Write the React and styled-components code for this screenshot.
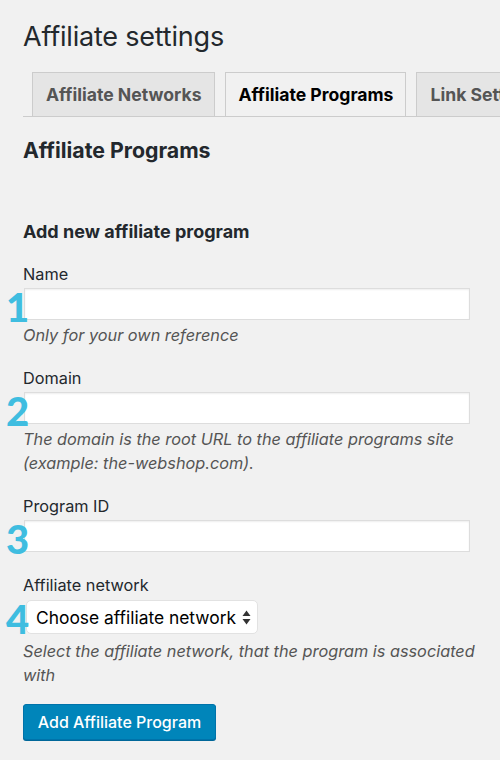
import React from "react";
import styled, { createGlobalStyle } from "styled-components";

const Global = createGlobalStyle`
  html, body { margin: 0; padding: 0; background: #f1f1f1; }
  body { font-family: Inter, "Noto Sans", sans-serif; color: #23282d; overflow: hidden; }
  * { box-sizing: border-box; }
`;

const Page = styled.div`
  width: 500px;
  height: 760px;
  overflow: hidden;
  padding: 19px 0 0 23px;
`;

const Title = styled.h1`
  margin: 0;
  font-size: 27px;
  font-weight: 400;
  line-height: 36px;
  letter-spacing: -0.2px;
`;

const TabBar = styled.div`
  display: flex;
  gap: 10px;
  padding-left: 9px;
  margin-top: 17px;
  border-bottom: 1px solid #ccc;
  white-space: nowrap;
  overflow: hidden;
`;

const Tab = styled.div`
  flex: none;
  height: 45px;
  margin-bottom: -1px;
  padding: 0 12px 0 13px;
  display: flex;
  align-items: center;
  font-size: 17.6px;
  font-weight: 700;
  border: 1px solid #ccc;
  border-bottom-color: ${(p) => (p.$active ? "#f1f1f1" : "#ccc")};
  background: ${(p) => (p.$active ? "#f1f1f1" : "#e5e5e5")};
  color: ${(p) => (p.$active ? "#000" : "#555")};
`;

const SectionTitle = styled.h2`
  margin: 19px 0 0;
  font-size: 21.3px;
  font-weight: 700;
  line-height: 28px;
`;

const SubTitle = styled.h3`
  margin: 56px 0 0;
  font-size: 18px;
  font-weight: 700;
  line-height: 24px;
`;

const Form = styled.div`
  display: flex;
  flex-direction: column;
  margin-top: 18px;
`;

const Field = styled.div`
  position: relative;
  display: flex;
  flex-direction: column;
  align-items: flex-start;
  margin-bottom: ${(p) => p.$gap}px;
`;

const Label = styled.label`
  font-size: 16.3px;
  line-height: 24px;
  color: #23282d;
`;

const Marker = styled.span`
  position: absolute;
  left: -17px;
  top: ${(p) => p.$top}px;
  font-family: Lato, "Open Sans", sans-serif;
  font-weight: 900;
  font-size: 40px;
  line-height: 1;
  color: #3fbde0;
  pointer-events: none;
  z-index: 2;
`;

const TextInput = styled.input`
  margin: 2px 0 0 1px;
  width: 446px;
  height: 32px;
  border: 1px solid #ddd;
  background: #fff;
  box-shadow: inset 0 1px 2px rgba(0, 0, 0, 0.07);
  font-size: 16px;
  outline: none;
`;

const Help = styled.p`
  margin: ${(p) => p.$top ?? 3}px 0 0;
  font-size: 16.3px;
  line-height: 24px;
  font-style: italic;
  color: #555;
  max-width: 460px;
`;

const SelectBox = styled.div`
  margin: 3px 0 0 3px;
  width: 232px;
  height: 34px;
  display: flex;
  align-items: center;
  justify-content: space-between;
  padding: 0 6px 0 9px;
  background: #fff;
  border: 1px solid #e2e2e2;
  border-radius: 5px;
  font-size: 17.4px;
  color: #000;
  white-space: nowrap;
`;

const Arrows = styled.svg`
  width: 9px;
  height: 15px;
  flex: none;
`;

const Button = styled.button`
  margin-top: 17px;
  width: 193px;
  height: 36px;
  border: 1px solid #0073aa;
  border-radius: 3px;
  background: #0085ba;
  box-shadow: 0 1px 0 #006799;
  color: #fff;
  font-family: Inter, "Noto Sans", sans-serif;
  font-size: 16px;
  font-weight: 500;
  cursor: pointer;
`;

export default function App() {
  return (
    <Page>
      <Global />
      <Title>Affiliate settings</Title>
      <TabBar>
        <Tab>Affiliate Networks</Tab>
        <Tab $active>Affiliate Programs</Tab>
        <Tab>Link Settings</Tab>
      </TabBar>
      <SectionTitle>Affiliate Programs</SectionTitle>
      <SubTitle>Add new affiliate program</SubTitle>
      <Form>
        <Field $gap={19}>
          <Label>Name</Label>
          <Marker $top={25}>1</Marker>
          <TextInput />
          <Help>Only for your own reference</Help>
        </Field>
        <Field $gap={19}>
          <Label>Domain</Label>
          <Marker $top={25}>2</Marker>
          <TextInput />
          <Help>
            The domain is the root URL to the affiliate programs site (example: the-webshop.com).
          </Help>
        </Field>
        <Field $gap={21}>
          <Label>Program ID</Label>
          <Marker $top={25}>3</Marker>
          <TextInput />
        </Field>
        <Field $gap={0}>
          <Label>Affiliate network</Label>
          <Marker $top={26}>4</Marker>
          <SelectBox>
            <span>Choose affiliate network</span>
            <Arrows viewBox="0 0 9 15">
              <path d="M4.5 0.5 L8.5 6 H0.5 Z" fill="#333" />
              <path d="M4.5 14.5 L8.5 9 H0.5 Z" fill="#333" />
            </Arrows>
          </SelectBox>
          <Help $top={5}>Select the affiliate network, that the program is associated with</Help>
        </Field>
      </Form>
      <Button>Add Affiliate Program</Button>
    </Page>
  );
}
